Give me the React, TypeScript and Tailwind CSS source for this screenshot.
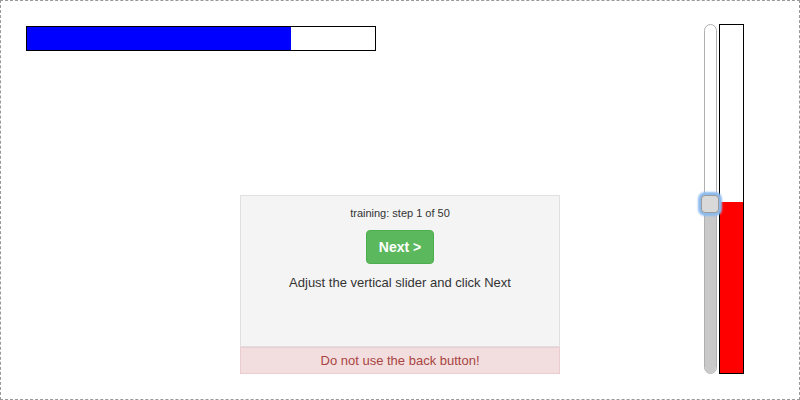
export default function App() {
  const progress = 264;
  const level = 171;

  return (
    <div
      className="w-[800px] h-[400px] box-border border border-dashed border-[#999] bg-white grid grid-cols-[239px_320px_239px] grid-rows-[1fr_auto] pt-[23px] pb-[25px] text-[#333]"
      style={{ fontFamily: '"Liberation Sans", Arial, sans-serif' }}
    >
      {/* progress bar */}
      <div className="col-start-1 col-span-2 row-start-1 self-start ml-[25px] mt-[2px] w-[350px] h-[25px] border border-black bg-white flex">
        <div className="h-full bg-[#0000ff]" style={{ width: progress }} />
      </div>

      {/* slider + level */}
      <div className="col-start-3 row-start-1 row-span-2 justify-self-end mr-[55px] h-[350px] flex gap-[2px]">
        <div className="relative w-[13px] h-full">
          <div className="w-full h-full rounded-full border border-[#b0b0b0] bg-white overflow-hidden flex flex-col">
            <div className="flex-1" />
            <div className="h-[169px] bg-[#c9c9c9]" />
          </div>
          <div className="absolute left-[-3px] top-[171px] w-[18px] h-[18px] rounded-[4px] border border-[#9a9a9a] bg-[#d9d9d9] shadow-[0_0_2px_3px_#8dbbee]" />
        </div>
        <div className="w-[25px] h-full border border-black bg-white flex flex-col justify-end">
          <div className="bg-[#ff0000]" style={{ height: level }} />
        </div>
      </div>

      {/* instructions panel */}
      <div className="col-start-2 row-start-2 w-[320px] h-[179px] flex flex-col">
        <div className="flex-1 border border-[#e0e0e0] bg-[#f4f4f4] flex flex-col items-center pt-[9px]">
          <div className="text-[11px] leading-[16px]">training: step 1 of 50</div>
          <button className="mt-[9px] w-[68px] h-[34px] rounded-[4px] bg-[#5cb85c] border border-[#4cae4c] text-white text-[14px] font-bold">
            Next &gt;
          </button>
          <div className="mt-[10px] text-[13px] leading-[18px]">Adjust the vertical slider and click Next</div>
        </div>
        <div className="h-[27px] border border-[#ebccd1] bg-[#f2dede] text-[#a94442] text-[13px] flex items-center justify-center">
          Do not use the back button!
        </div>
      </div>
    </div>
  );
}
